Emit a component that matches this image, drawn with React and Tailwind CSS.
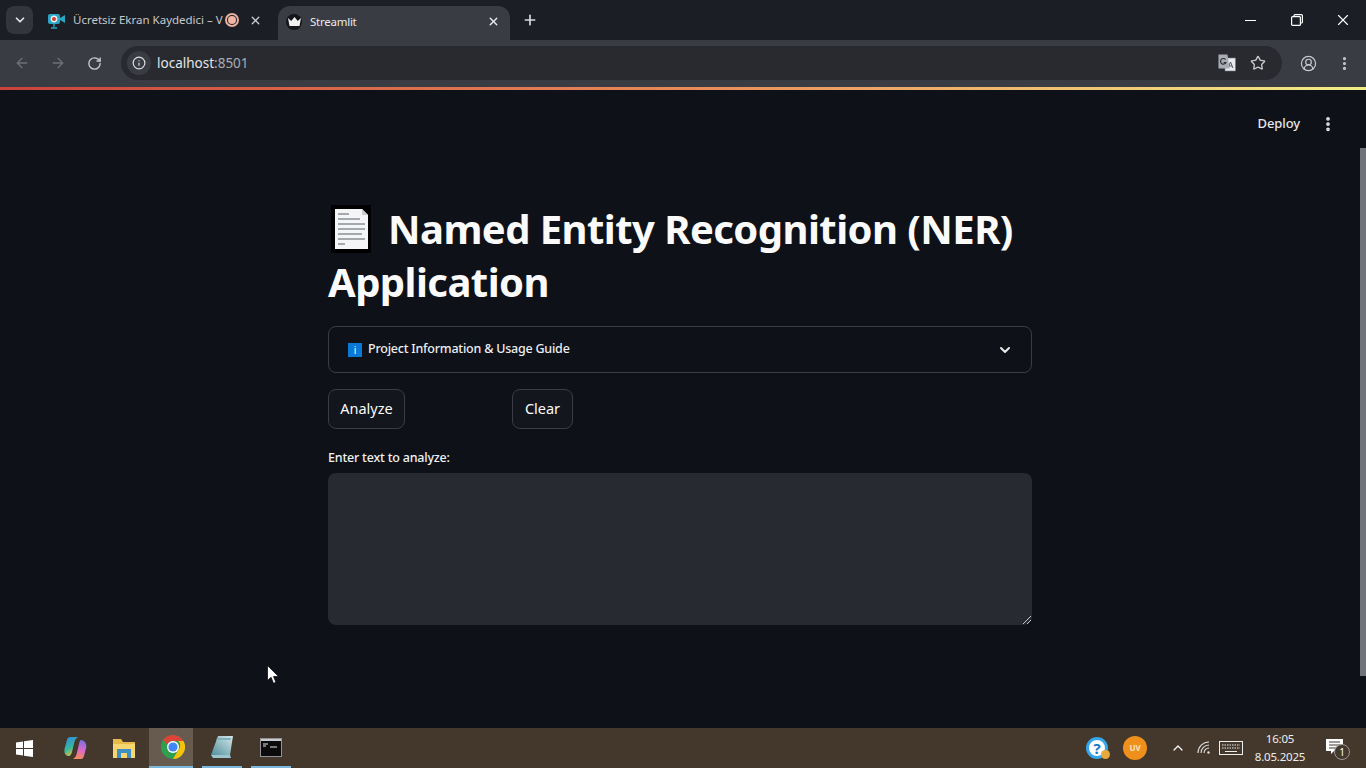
import React from "react";
import { X, Plus, ChevronDown, ArrowLeft, ArrowRight, RotateCw, Info, Star, CircleUserRound, EllipsisVertical, ChevronUp } from "lucide-react";

function RecorderIcon() {
  return (
    <svg width="17" height="17" viewBox="0 0 17 17">
      <rect x="0" y="2" width="12" height="10" rx="2" fill="#2aa6c4" />
      <path d="M12 6l5-3v8l-5-3z" fill="#2aa6c4" />
      <circle cx="6" cy="7" r="3.4" fill="#e8eef0" />
      <circle cx="6" cy="7" r="2" fill="#d8382c" />
      <path d="M6 12v3M3 16h6" stroke="#2aa6c4" strokeWidth="1.4" />
    </svg>
  );
}

function CrownIcon() {
  return (
    <span className="flex h-[16px] w-[16px] items-center justify-center rounded-full bg-[#14161b]">
      <svg width="13" height="9" viewBox="0 0 13 9">
        <path d="M0 1l3.2 3L6.5 0l3.3 4L13 1l-1.5 8h-10z" fill="#f1f1f1" />
      </svg>
    </span>
  );
}

function TranslateIcon() {
  return (
    <svg width="18" height="18" viewBox="0 0 18 18">
      <rect x="7" y="4" width="10.5" height="13" fill="#e8eaed" stroke="#70747a" strokeWidth="0.6" />
      <path d="M10 14l2.5-6 2.5 6M11 12h3" stroke="#55585e" strokeWidth="1" fill="none" />
      <path d="M0.5 0.5h9l2 14h-11z" fill="#a9adb3" />
      <path d="M7.5 5.5a2.8 2.8 0 1 0 0.4 3H5.6" stroke="#2e3035" strokeWidth="1.2" fill="none" />
    </svg>
  );
}

function PageEmoji() {
  return (
    <svg width="46" height="50" viewBox="0 0 46 50" className="mr-[14px] shrink-0">
      <rect x="3" y="1" width="40" height="48" fill="#000" />
      <path d="M7 5h27l6 6v34H7z" fill="#f4f5f6" />
      <path d="M34 5l6 6h-6z" fill="#c9ccd0" />
      <path d="M10 10h11M10 15h22M10 20h27M10 25h27M10 30h24M10 35h27M10 40h7" stroke="#8b8f94" strokeWidth="1.4" />
    </svg>
  );
}

function InfoEmoji() {
  return (
    <span className="mr-[6px] flex h-[14px] w-[14px] items-center justify-center bg-[#0a78d7] text-[10px] leading-none text-white">
      i
    </span>
  );
}

function WindowsIcon() {
  return (
    <svg width="17" height="17" viewBox="0 0 17 17" fill="#fff">
      <path d="M0 2.4l7-1v6.6H0zM8 1.3L17 0v8H8zM0 9h7v6.6l-7-1zM8 9h9v8l-9-1.3z" />
    </svg>
  );
}

function CopilotIcon() {
  return (
    <svg width="23" height="24" viewBox="0 0 23 24">
      <defs>
        <linearGradient id="cpA" x1="0.2" y1="0" x2="0.6" y2="1">
          <stop offset="0" stopColor="#2f8fe0" />
          <stop offset="0.55" stopColor="#36b6a0" />
          <stop offset="1" stopColor="#e6c23e" />
        </linearGradient>
        <linearGradient id="cpB" x1="0.6" y1="0" x2="0.4" y2="1">
          <stop offset="0" stopColor="#7a6ee0" />
          <stop offset="0.5" stopColor="#d86ac8" />
          <stop offset="1" stopColor="#f58a5a" />
        </linearGradient>
      </defs>
      <path d="M6 1h8c-2 1-3 3-3.6 5L8 16c-.6 2-1.4 4-3.5 4C1.5 20 0 17 .5 13L3 4c.4-2 1.5-3 3-3z" fill="url(#cpA)" />
      <path d="M17 4c3 0 5.6 3 5.4 7l-2.4 9c-.5 2-1.6 3-3 3H9c2-1 3-3 3.6-5L15 8c.4-2 1-4 2-4z" fill="url(#cpB)" />
    </svg>
  );
}

function FolderIcon() {
  return (
    <svg width="22" height="19" viewBox="0 0 22 19">
      <path d="M0 0h8l2 3h12v16H0z" fill="#e8bb48" />
      <path d="M0 5h22v14H0z" fill="#f6d66f" />
      <path d="M4 10h14v9h-4v-5H8v5H4z" fill="#3f8fc4" />
    </svg>
  );
}

function ChromeIcon() {
  return (
    <svg width="24" height="24" viewBox="0 0 24 24">
      <circle cx="12" cy="12" r="12" fill="#2f9e4f" />
      <path d="M12 0a12 12 0 0 1 10.4 6H12a6 6 0 0 0-5.6 3.8L2.3 4.8A12 12 0 0 1 12 0z" fill="#dc4437" />
      <path d="M22.4 6A12 12 0 0 1 12 24l5.2-9a6 6 0 0 0 0-9z" fill="#f4c20d" />
      <circle cx="12" cy="12" r="6" fill="#fff" />
      <circle cx="12" cy="12" r="4.6" fill="#4285f4" />
    </svg>
  );
}

function NotesIcon() {
  return (
    <svg width="22" height="24" viewBox="0 0 22 24">
      <defs>
        <linearGradient id="ntA" x1="0" y1="1" x2="1" y2="0">
          <stop offset="0" stopColor="#4f8f9c" />
          <stop offset="1" stopColor="#d6e8ea" />
        </linearGradient>
      </defs>
      <path d="M7 1h15l-3 19H0z" fill="url(#ntA)" />
      <path d="M0 20h19l1 3H2z" fill="#9cc4cf" />
      <path d="M6 3h14l-.3 2H5.4z" fill="#7fb0bc" />
    </svg>
  );
}

function CmdIcon() {
  return (
    <svg width="22" height="19" viewBox="0 0 22 19">
      <rect x="0.5" y="0.5" width="21" height="18" fill="#0b0b0b" stroke="#8f9296" />
      <rect x="1" y="1" width="20" height="2" fill="#c8cacc" />
      <path d="M3 6h5M3 8h3M10 9h7" stroke="#e6e6e6" strokeWidth="1.2" />
    </svg>
  );
}

function HelpIcon() {
  return (
    <span className="relative flex h-[22px] w-[22px] items-center justify-center rounded-full border-[3px] border-[#35a6e8] bg-white text-[15px] font-bold leading-none text-[#1478c8]">
      ?
      <span className="absolute -bottom-[3px] -right-[5px] h-[9px] w-[9px] rounded-full bg-[#e8a93c]" />
    </span>
  );
}

function TabStrip() {
  return (
    <div className="flex h-10 shrink-0 items-end bg-[#1b1e25] text-[#c7c9cc]">
      <div className="mb-[6px] ml-[6px] flex h-[28px] w-[27px] items-center justify-center rounded-lg bg-[#33353c]">
        <ChevronDown size={14} strokeWidth={3} color="#e3e3e3" />
      </div>
      <div className="mb-[6px] flex h-[28px] w-[245px] items-center pl-[15px]">
        <RecorderIcon />
        <span className="ml-[8px] w-[146px] whitespace-nowrap text-[11.5px]">Ücretsiz Ekran Kaydedici – V</span>
        <span className="ml-[6px] flex h-[14px] w-[14px] items-center justify-center rounded-full border-2 border-[#e8b09f]">
          <span className="h-[8px] w-[8px] rounded-full bg-[#f2b5a5]" />
        </span>
        <X size={13} strokeWidth={2.5} className="ml-[10px]" />
      </div>
      <div className="flex h-[34px] w-[232px] items-center rounded-t-xl bg-[#3a3c43] pb-[3px] pl-[8px] pr-[10px] text-[#e8eaed]">
        <CrownIcon />
        <span className="ml-[8px] flex-1 text-[11.5px] tracking-[-0.25px]">Streamlit</span>
        <X size={13} strokeWidth={2.5} />
      </div>
      <div className="mb-[12px] ml-[12px] flex items-center">
        <Plus size={16} strokeWidth={2.5} color="#d8dadd" />
      </div>
      <div className="mb-[11px] ml-auto flex items-center text-white">
        <span className="mr-[35px] h-px w-[11px] bg-white" />
        <svg width="12" height="12" viewBox="0 0 12 12" fill="none" stroke="#fff" strokeWidth="1.2" className="mr-[31px]">
          <rect x="0.6" y="2.6" width="8.8" height="8.8" rx="1" />
          <path d="M3 2.4V1.6a1 1 0 0 1 1-1h6.4a1 1 0 0 1 1 1V8a1 1 0 0 1-1 1h-.8" />
        </svg>
        <X size={18} strokeWidth={1.5} className="mr-[14px]" />
      </div>
    </div>
  );
}

function Toolbar() {
  return (
    <div className="flex h-[47px] shrink-0 items-start bg-[#3a3c43] pt-[6px]">
      <div className="flex h-[34px] w-[121px] items-center pl-[14px]">
        <ArrowLeft size={16} strokeWidth={2} color="#6d7076" />
        <ArrowRight size={16} strokeWidth={2} color="#6d7076" className="ml-[20px]" />
        <RotateCw size={15} strokeWidth={2.2} color="#c7c9cc" className="ml-[21px]" />
      </div>
      <div className="flex h-[34px] w-[1161px] items-center rounded-full bg-[#282a30] pl-[6px] pr-[16px]">
        <span className="flex h-[24px] w-[24px] items-center justify-center rounded-full bg-[#3a3c43]">
          <Info size={14} strokeWidth={2} color="#dfe1e4" />
        </span>
        <span className="ml-[6px] text-[13.5px] text-[#e3e5e8]">
          localhost<span className="text-[#a9acb0]">:8501</span>
        </span>
        <span className="ml-auto flex items-center gap-[14px]">
          <TranslateIcon />
          <Star size={16} strokeWidth={2} color="#c7c9cc" />
        </span>
      </div>
      <div className="flex h-[34px] flex-1 items-center pl-[18px]">
        <CircleUserRound size={17} strokeWidth={1.7} color="#c7c9cc" />
        <EllipsisVertical size={17} strokeWidth={2.5} color="#c7c9cc" className="ml-[19px]" />
      </div>
    </div>
  );
}

function Taskbar() {
  return (
    <div className="flex h-10 shrink-0 items-center bg-[#44382c] text-white">
      <div className="ml-[16px] flex items-center">
        <WindowsIcon />
      </div>
      <div className="ml-[31px] flex items-center">
        <CopilotIcon />
      </div>
      <div className="ml-[26px] flex items-center">
        <FolderIcon />
      </div>
      <div className="ml-[14px] flex h-10 w-[44px] items-center justify-center border-b-2 border-[#7cb6dd] bg-[#675b50] pl-[4px]">
        <ChromeIcon />
      </div>
      <div className="ml-[9px] flex h-10 w-[40px] items-center justify-center border-b-2 border-[#7cb6dd]">
        <NotesIcon />
      </div>
      <div className="ml-[9px] flex h-10 w-[40px] items-center justify-center border-b-2 border-[#7cb6dd]">
        <CmdIcon />
      </div>
      <div className="ml-auto flex items-center">
        <HelpIcon />
        <span className="ml-[15px] flex h-[24px] w-[24px] items-center justify-center rounded-full bg-[#ef8f1c] text-[8px] font-bold text-[#fbe3bf]">
          UV
        </span>
        <ChevronUp size={16} strokeWidth={1.8} className="ml-[23px]" />
        <svg width="14" height="14" viewBox="0 0 14 14" fill="none" stroke="#ddd" strokeWidth="1.1" className="ml-[11px]">
          <path d="M1 12a11 11 0 0 1 11-11M4 12a8 8 0 0 1 8-8M7 12a5 5 0 0 1 5-5" />
          <circle cx="11.5" cy="11.5" r="1.2" fill="#ddd" stroke="none" />
        </svg>
        <svg width="24" height="14" viewBox="0 0 24 14" fill="none" stroke="#eee" className="ml-[8px]">
          <rect x="0.5" y="0.5" width="23" height="13" />
          <path d="M3 4h18M3 7h18" strokeDasharray="1.5 1" />
          <path d="M6 10.5h12" />
        </svg>
        <div className="ml-[12px] flex w-[50px] flex-col items-center text-[11.5px] leading-[18px] tracking-[-0.2px] text-[#eeeeee]">
          <span>16:05</span>
          <span className="whitespace-nowrap">8.05.2025</span>
        </div>
        <div className="relative ml-[21px] mr-[16px] h-[24px] w-[24px]">
          <svg width="17" height="16" viewBox="0 0 17 16" className="mt-[3px]">
            <path d="M0 0h17v12H8l-3 3v-3H0z" fill="#fff" />
            <path d="M3 3h11M3 6h11M3 9h7" stroke="#44382c" />
          </svg>
          <span className="absolute bottom-0 right-0 flex h-[16px] w-[16px] items-center justify-center rounded-full border border-[#999] bg-[#44382c] text-[10px]">
            1
          </span>
        </div>
      </div>
    </div>
  );
}

export default function App() {
  return (
    <div className="flex h-[768px] w-[1366px] flex-col overflow-hidden bg-[#0e1117] font-['Noto_Sans','Liberation_Sans',sans-serif]">
      <TabStrip />
      <Toolbar />
      <div className="h-[3px] shrink-0 bg-gradient-to-r from-[#c9433c] via-[#e88a5a] to-[#f1ee86]" />
      <div className="relative min-h-0 flex-1 bg-[#0e1117]">
        <div className="flex h-[68px] items-center justify-end pr-[29px] text-[#e6e7ea]">
          <span className="mr-[19px] text-[13px] font-medium tracking-[-0.1px]">Deploy</span>
          <EllipsisVertical size={18} strokeWidth={3} />
        </div>

        <div className="ml-[328px] w-[704px] pt-[44px]">
          <h1 className="whitespace-nowrap text-[40px] font-bold leading-[53px] tracking-[-0.55px] text-[#fafafa]">
            <span className="flex items-center">
              <PageEmoji />
              Named Entity Recognition (NER)
            </span>
            Application
          </h1>

          <div className="mt-[18px] flex h-[47px] items-center rounded-lg border border-[#3a3d45] pl-[19px] pr-[18px]">
            <InfoEmoji />
            <span className="text-[12.5px] font-medium tracking-[-0.22px] text-[#eceef0]">Project Information &amp; Usage Guide</span>
            <ChevronDown size={16} strokeWidth={3} color="#e8e8ea" className="ml-auto" />
          </div>

          <div className="mt-[16px] grid grid-cols-[184px_1fr]">
            <button className="h-10 w-[77px] rounded-lg border border-[#3a3d45] bg-[#13161d] text-[14.5px] text-[#fafafa]">Analyze</button>
            <button className="h-10 w-[61px] rounded-lg border border-[#3a3d45] bg-[#13161d] text-[14.5px] text-[#fafafa]">Clear</button>
          </div>

          <label className="mt-[19px] block text-[12.5px] font-medium leading-[20px] tracking-[-0.2px] text-[#f0f1f3]">Enter text to analyze:</label>

          <div className="relative mt-[5px] h-[152px] rounded-lg bg-[#272a31]">
            <svg width="8" height="8" viewBox="0 0 8 8" className="absolute bottom-[1px] right-[1px]" stroke="#c4c6cc" strokeWidth="1">
              <path d="M0 8l8-8M4 8l4-4" />
            </svg>
          </div>
        </div>

        <div className="absolute bottom-[52px] right-0 top-[58px] w-[6px] bg-[#70737a]" />

        <svg width="13" height="19" viewBox="0 0 13 19" className="absolute left-[267px] top-[575px]">
          <path d="M0.5 0.5v15l3.6-3.2 2.4 6 2.4-1-2.4-5.8h5z" fill="#fff" stroke="#000" strokeWidth="0.7" />
        </svg>
      </div>
      <Taskbar />
    </div>
  );
}
